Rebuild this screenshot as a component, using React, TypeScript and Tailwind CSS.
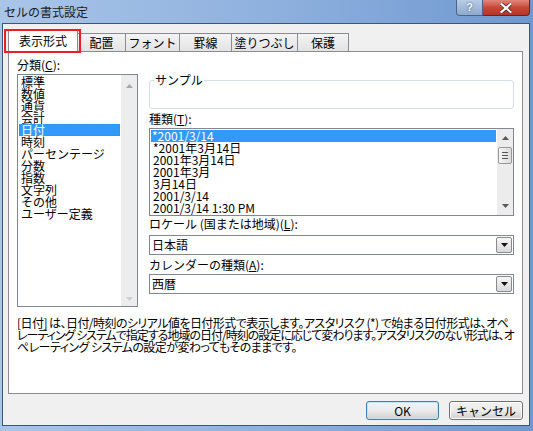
import React from "react";

const Tri = ({ dir, color }: { dir: "up" | "down"; color: string }) => (
  <svg width="7" height="4" viewBox="0 0 7 4" className="block">
    {dir === "up" ? (
      <path d="M0 4 L3.5 0 L7 4 Z" fill={color} />
    ) : (
      <path d="M0 0 L7 0 L3.5 4 Z" fill={color} />
    )}
  </svg>
);

const ComboArrow = () => (
  <div className="w-[16px] h-[16px] mr-[1px] border border-[#8a8a8a] rounded-[2px] bg-gradient-to-b from-[#f6f6f6] to-[#d9d9d9] flex items-center justify-center">
    <Tri dir="down" color="#111" />
  </div>
);

const categories = [
  "標準",
  "数値",
  "通貨",
  "会計",
  "日付",
  "時刻",
  "パーセンテージ",
  "分数",
  "指数",
  "文字列",
  "その他",
  "ユーザー定義",
];

const types = [
  "*2001/3/14",
  "*2001年3月14日",
  "2001年3月14日",
  "2001年3月",
  "3月14日",
  "2001/3/14",
  "2001/3/14 1:30 PM",
];

export default function App() {
  return (
    <div className="w-[533px] h-[431px] overflow-hidden bg-gradient-to-r from-[#a9c5e8] via-[#8fb1de] to-[#6f98d0] font-['Noto_Sans_CJK_JP',sans-serif] text-[12px] leading-[12px] text-black flex flex-col">
      {/* title bar */}
      <div className="h-[23px] shrink-0 flex items-start justify-between">
        <div className="pl-[4px] pt-[4px] text-[12px] leading-[15px] text-[#1a1a1a]">
          セルの書式設定
        </div>
        <div className="flex mr-[3px]">
          <div className="w-[27px] h-[16px] rounded-bl-[4px] border border-t-0 border-[#4b6485] bg-gradient-to-b from-[#b8cde6] to-[#8ea9cc] flex items-center justify-center text-white font-bold text-[11px] leading-[11px] font-['Liberation_Sans',sans-serif] [text-shadow:0_0_2px_#2a3d5c]">
            ?
          </div>
          <div className="w-[47px] h-[16px] rounded-br-[4px] border border-t-0 border-l-0 border-[#4b3030] bg-gradient-to-b from-[#e0877c] via-[#c9463a] to-[#b83326] flex items-center justify-center">
            <svg width="12" height="10" viewBox="0 0 12 10">
              <path
                d="M1.5 1 L10.5 9 M10.5 1 L1.5 9"
                stroke="#3b1a14"
                strokeWidth="3.6"
                strokeLinecap="square"
              />
              <path
                d="M1.5 1 L10.5 9 M10.5 1 L1.5 9"
                stroke="#ffffff"
                strokeWidth="2.2"
                strokeLinecap="square"
              />
            </svg>
          </div>
        </div>
      </div>

      {/* body */}
      <div className="relative ml-[2px] w-[528px] h-[403px] shrink-0 border border-[#3a5679] bg-[#f0f0f0] flex flex-col">
        {/* tabs */}
        <div className="flex items-end pl-[5px] pt-[5px]">
          <div className="relative z-10 -mb-px h-[23px] w-[70px] bg-white border border-b-0 border-[#898c95] flex items-center justify-center">
            表示形式
          </div>
          {[
            ["配置", 48],
            ["フォント", 54],
            ["罫線", 52],
            ["塗りつぶし", 66],
            ["保護", 51],
          ].map(([t, w]) => (
            <div
              key={t as string}
              style={{ width: w as number }}
              className="h-[18px] border-t border-r border-[#898c95] bg-gradient-to-b from-[#f4f4f4] to-[#e3e3e3] flex items-center justify-center"
            >
              {t}
            </div>
          ))}
        </div>

        {/* red annotation */}
        <div className="absolute left-[1px] top-[5px] w-[77px] h-[24px] border-2 border-[#ee1c25] z-20 pointer-events-none" />

        {/* panel */}
        <div className="ml-[5px] w-[515px] h-[343px] border border-[#898c95] bg-white flex flex-col pl-[8px]">
          <div className="flex">
            {/* left column */}
            <div className="w-[121px] flex flex-col">
              <div className="h-[22px] pt-[7px]">
                分類(<span className="underline underline-offset-1">C</span>):
              </div>
              <div className="h-[233px] border border-[#828790] flex">
                <div className="flex-1 pt-[1px] px-[1px]">
                  {categories.map((c) =>
                    c === "日付" ? (
                      <div
                        key={c}
                        className="h-[12px] bg-[#3399ff] text-white border border-dotted border-[#cc6a1a] pl-[1px] leading-[10px] whitespace-nowrap"
                      >
                        {c}
                      </div>
                    ) : (
                      <div key={c} className="h-[12px] pl-[2px] whitespace-nowrap">
                        {c}
                      </div>
                    )
                  )}
                </div>
                <div className="w-[16px] bg-[#ededed] flex flex-col items-center justify-between pt-[9px] pb-[5px]">
                  <Tri dir="up" color="#a8a8a8" />
                  <Tri dir="down" color="#d0d0d0" />
                </div>
              </div>
            </div>

            {/* right column */}
            <div className="ml-[11px] w-[365px] flex flex-col">
              <fieldset className="mt-[22px] h-[35px] border border-[#d5dfe5] rounded-[3px] px-[4px]">
                <legend className="px-[1px] leading-[12px]">サンプル</legend>
              </fieldset>
              <div className="h-[19px] pt-[4px]">
                種類(<span className="underline underline-offset-1">T</span>):
              </div>
              <div className="h-[88px] border border-[#828790] flex">
                <div className="flex-1 pt-[1px] px-[1px]">
                  {types.map((t, i) => (
                    <div
                      key={i}
                      className={
                        i === 0
                          ? "h-[12px] pl-[1px] bg-[#3399ff] text-white whitespace-nowrap"
                          : "h-[12px] pl-[2px] whitespace-nowrap"
                      }
                    >
                      {t}
                    </div>
                  ))}
                </div>
                <div className="w-[16px] bg-[#ececec] flex flex-col items-center">
                  <div className="h-[18px] flex items-center justify-center">
                    <Tri dir="up" color="#5a5a5a" />
                  </div>
                  <div className="w-[14px] h-[17px] border border-[#989898] rounded-[2px] bg-gradient-to-r from-[#f4f4f4] to-[#dcdcdc] flex flex-col items-center justify-center gap-[2px]">
                    <div className="w-[6px] h-px bg-[#555]" />
                    <div className="w-[6px] h-px bg-[#555]" />
                    <div className="w-[6px] h-px bg-[#555]" />
                  </div>
                  <div className="flex-1" />
                  <div className="h-[18px] flex items-center justify-center">
                    <Tri dir="down" color="#5a5a5a" />
                  </div>
                </div>
              </div>
              <div className="h-[19px] pt-[2px] whitespace-nowrap">
                ロケール (国または地域)(<span className="underline underline-offset-1">L</span>):
              </div>
              <div className="h-[20px] border border-[#828790] flex items-center justify-between pl-[2px]">
                <span>日本語</span>
                <ComboArrow />
              </div>
              <div className="h-[19px] pt-[4px] whitespace-nowrap">
                カレンダーの種類(<span className="underline underline-offset-1">A</span>):
              </div>
              <div className="h-[20px] border border-[#828790] flex items-center justify-between pl-[2px]">
                <span>西暦</span>
                <ComboArrow />
              </div>
            </div>
          </div>

          {/* description */}
          <div className="mt-[10px] flex flex-col [font-feature-settings:'palt'] whitespace-nowrap">
            <div className="h-[12px] tracking-[-0.55px]">
              [日付] は、日付/時刻のシリアル値を日付形式で表示します。アスタリスク (*) で始まる日付形式は、オペ
            </div>
            <div className="h-[12px] tracking-[-1px]">
              レーティング システムで指定する地域の日付/時刻の設定に応じて変わります。アスタリスクのない形式は、オ
            </div>
            <div className="h-[12px] tracking-[-0.55px]">
              ペレーティング システムの設定が変わってもそのままです。
            </div>
          </div>
        </div>

        {/* buttons */}
        <div className="mt-[7px] flex justify-end gap-[10px] pr-[6px]">
          <div className="w-[73px] h-[19px] rounded-[3px] border border-[#3c7fb1] bg-gradient-to-b from-[#f2f2f2] via-[#ebebeb] to-[#cfcfcf] flex items-center justify-center shadow-[inset_0_0_0_1px_#bfe5f7]">
            OK
          </div>
          <div className="w-[74px] h-[19px] rounded-[3px] border border-[#707070] bg-gradient-to-b from-[#f2f2f2] via-[#ebebeb] to-[#cfcfcf] flex items-center justify-center shadow-[inset_0_0_0_1px_#fcfcfc]">
            キャンセル
          </div>
        </div>
      </div>
    </div>
  );
}
